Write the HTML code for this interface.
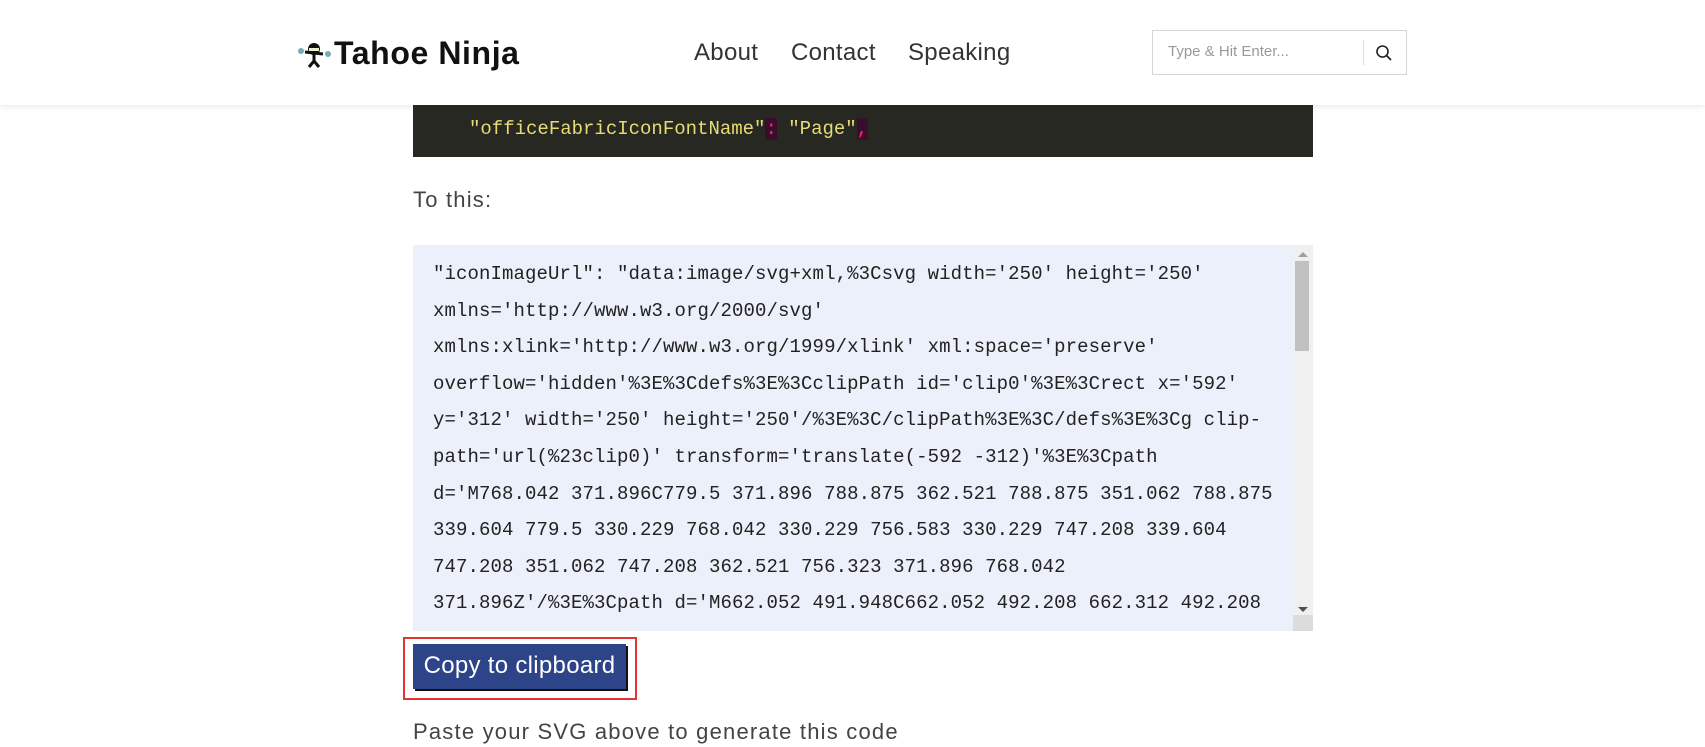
<!DOCTYPE html>
<html><head><meta charset="utf-8"><style>
*{margin:0;padding:0;box-sizing:border-box}
body{width:1705px;height:747px;overflow:hidden;background:#fff;font-family:"Liberation Sans",sans-serif;position:relative}
.hdr{position:absolute;left:0;top:0;width:1705px;height:105px;background:#fff;box-shadow:0 2px 6px rgba(0,0,0,.08);z-index:5}
.logo{position:absolute;left:334px;top:35px;font-size:32px;font-weight:bold;color:#111;letter-spacing:0.6px}
.nav{position:absolute;top:39px;font-size:24px;color:#333;letter-spacing:0.3px}
.search{position:absolute;left:1152px;top:30px;width:255px;height:45px;border:1px solid #d5d5d5}
.search span{position:absolute;left:15px;top:12px;font-size:15px;color:#999}
.search i{position:absolute;left:210px;top:9px;width:1px;height:25px;background:#ddd}
.dark{position:absolute;left:413px;top:90px;width:900px;height:67px;background:#272822;font-family:"Liberation Mono",monospace;font-size:19px;color:#e6db74}
.dark div{position:absolute;left:56px;top:28px;white-space:pre}
.p{position:absolute;left:413px;font-size:22px;color:#444;letter-spacing:1.2px}
.code{position:absolute;left:413px;top:245px;width:900px;height:386px;background:#ecf0fa;overflow:hidden}
.code pre{position:absolute;left:20px;top:11px;font-family:"Liberation Mono",monospace;font-size:19px;line-height:36.6px;color:#222;letter-spacing:0.1px}
.sb{position:absolute;left:880px;top:0;width:20px;height:386px;background:#f0f0f0}
.btnbox{position:absolute;left:403px;top:637px;width:234px;height:63px;border:2px solid #e53333}
.btn{position:absolute;left:413px;top:644px;width:213px;height:45px;background:#2e4488;color:#fff;font-size:24px;line-height:44px;text-align:center;box-shadow:2px 2px 0 #111;letter-spacing:0.3px}
</style></head><body>
<div class="hdr">
<svg style="position:absolute;left:297px;top:42px" width="36" height="26" viewBox="0 0 36 26"><circle cx="4" cy="9" r="3" fill="#7ab"/><circle cx="31" cy="12" r="3" fill="#7ab"/><circle cx="17" cy="7" r="6" fill="#111"/><rect x="12" y="6" width="10" height="3" fill="#eec"/><path d="M8 10 L26 12 M17 12 L17 19 M17 19 L12 25 M17 19 L22 25" stroke="#111" stroke-width="3" fill="none"/></svg>
<div class="logo">Tahoe Ninja</div>
<div class="nav" style="left:694px">About</div>
<div class="nav" style="left:791px">Contact</div>
<div class="nav" style="left:908px">Speaking</div>
<div class="search"><span>Type &amp; Hit Enter...</span><i></i>
<svg style="position:absolute;left:222px;top:13px" width="18" height="18" viewBox="0 0 18 18"><circle cx="7.5" cy="7.5" r="5.5" stroke="#222" stroke-width="1.6" fill="none"/><path d="M11.5 11.5 L16 16" stroke="#222" stroke-width="1.8"/></svg></div>
</div>
<div class="dark"><div>"officeFabricIconFontName"<span style="background:#3a0d2a;color:#f92672">:</span> "Page"<span style="background:#3a0d2a;color:#f92672">,</span></div></div>
<div class="p" style="top:187px">To this:</div>
<div class="code"><pre>"iconImageUrl": "data:image/svg+xml,%3Csvg width='250' height='250'
xmlns='http://www.w3.org/2000/svg'
xmlns:xlink='http://www.w3.org/1999/xlink' xml:space='preserve'
overflow='hidden'%3E%3Cdefs%3E%3CclipPath id='clip0'%3E%3Crect x='592'
y='312' width='250' height='250'/%3E%3C/clipPath%3E%3C/defs%3E%3Cg clip-
path='url(%23clip0)' transform='translate(-592 -312)'%3E%3Cpath
d='M768.042 371.896C779.5 371.896 788.875 362.521 788.875 351.062 788.875
339.604 779.5 330.229 768.042 330.229 756.583 330.229 747.208 339.604
747.208 351.062 747.208 362.521 756.323 371.896 768.042
371.896Z'/%3E%3Cpath d='M662.052 491.948C662.052 492.208 662.312 492.208</pre>
<div class="sb"><div style="position:absolute;left:2px;top:16px;width:14px;height:90px;background:#c1c1c1"></div>
<div style="position:absolute;left:5px;top:7px;border:5px solid transparent;border-bottom-color:#a0a0a0;border-top:0"></div>
<div style="position:absolute;left:5px;top:362px;border:5px solid transparent;border-top-color:#505050;border-bottom:0"></div>
<div style="position:absolute;left:0;top:370px;width:20px;height:16px;background:#dcdcdc"></div></div>
</div>
<div class="btnbox"></div>
<div class="btn">Copy to clipboard</div>
<div class="p" style="top:719px">Paste your SVG above to generate this code</div>
</body></html>
